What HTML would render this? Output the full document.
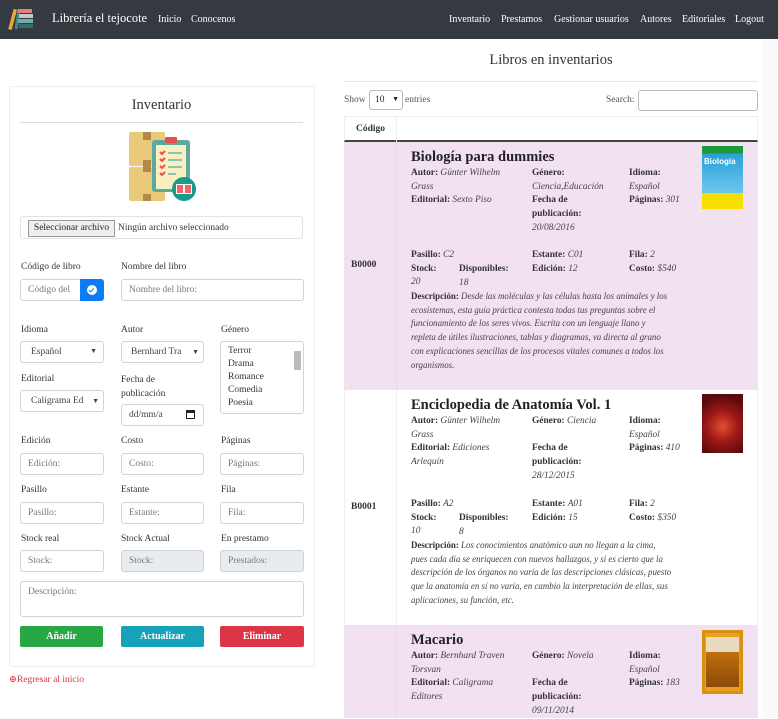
<!DOCTYPE html>
<html><head><meta charset="utf-8">
<style>
*{box-sizing:border-box;margin:0;padding:0}
body{width:778px;height:718px;overflow:hidden;background:#fff;font-family:"Liberation Serif","DejaVu Serif",serif;color:#212529;position:relative}
.a{position:absolute;white-space:nowrap}
.nav{position:absolute;left:0;top:0;width:778px;height:39px;background:#343a40}
.nl{color:#fff;font-size:10px;top:14px}
.lbl{font-size:9.5px;color:#333}
.inp{position:absolute;height:22px;border:1px solid #ced4da;border-radius:3px;background:#fff;font-size:9.5px;color:#777;padding:5px 7px;white-space:nowrap;overflow:hidden}
.dis{background:#e9ecef}
.btn{position:absolute;height:21px;border-radius:2px;color:#fff;font-size:10px;font-weight:bold;text-align:center;line-height:21px;top:626px;width:83px}
.row{position:absolute;left:344px;width:414px}
.cell{position:absolute;font-size:9.4px;line-height:13.7px;white-space:nowrap;color:#333}
.cell b{font-weight:bold}
.cell i{font-style:italic;color:#444}
.t{position:absolute;left:67px;font-size:14.5px;font-weight:bold;color:#222;white-space:nowrap}
.code{position:absolute;left:7px;font-size:9.5px;font-weight:bold;color:#333}
.desc{font-size:8.9px!important}
</style></head><body>
<div class="nav"></div>
<svg class="a" style="left:8px;top:5px" width="26" height="27" viewBox="0 0 26 27">
<rect x="3" y="4" width="3.5" height="21" fill="#e8a93a" transform="rotate(15 5 14)"/>
<rect x="8" y="4" width="3" height="20" fill="#3a8a8f" transform="rotate(8 9 14)"/>
<rect x="10" y="4" width="14" height="4" fill="#e08080"/>
<rect x="11" y="9" width="14" height="4" fill="#c0c8c8"/>
<rect x="10" y="14" width="15" height="4" fill="#7aa"/>
<rect x="11" y="19" width="14" height="4" fill="#2f6f6f"/>
</svg>
<div class="a" style="left:52px;top:11px;color:#fff;font-size:12.5px">Librería el tejocote</div>
<div class="a nl" style="left:158px">Inicio</div>
<div class="a nl" style="left:191px">Conocenos</div>
<div class="a nl" style="left:449px">Inventario</div>
<div class="a nl" style="left:501px">Prestamos</div>
<div class="a nl" style="left:554px">Gestionar usuarios</div>
<div class="a nl" style="left:640px">Autores</div>
<div class="a nl" style="left:682px">Editoriales</div>
<div class="a nl" style="left:735px">Logout</div>

<div class="a" style="left:9px;top:86px;width:306px;height:581px;border:1px solid #eee;border-radius:3px"></div>
<div class="a" style="left:20px;top:97px;width:283px;text-align:center;font-size:14.5px;color:#333">Inventario</div>
<div class="a" style="left:20px;top:122px;width:283px;border-top:1px solid #ddd"></div>
<svg class="a" style="left:128px;top:130px" width="70" height="74" viewBox="0 0 70 74">
<rect x="1" y="2" width="36" height="34" rx="2" fill="#e9c97a"/>
<rect x="1" y="37" width="36" height="34" rx="2" fill="#e9c97a"/>
<rect x="15" y="2" width="8" height="8" fill="#b3884a"/>
<rect x="15" y="30" width="8" height="12" fill="#b3884a"/>
<rect x="15" y="64" width="8" height="7" fill="#b3884a"/>
<rect x="24" y="10" width="38" height="52" rx="3" fill="#5fa8a0"/>
<rect x="28" y="15" width="30" height="44" fill="#faefc0"/>
<rect x="37" y="7" width="12" height="6" rx="1" fill="#e65050"/>
<g stroke="#e65050" stroke-width="2" fill="none"><path d="M32 22l2 2 3-3M32 29l2 2 3-3M32 36l2 2 3-3M32 43l2 2 3-3"/></g>
<g stroke="#5fb8b0" stroke-width="1.5"><path d="M40 23h14M40 30h14M40 37h14M40 44h8"/></g>
<circle cx="56" cy="59" r="12" fill="#1a9a8a"/>
<rect x="48" y="54" width="16" height="10" fill="#fff"/>
<rect x="49" y="55" width="6" height="8" fill="#e66"/><rect x="57" y="55" width="6" height="8" fill="#e66"/>
</svg>
<div class="a" style="left:20px;top:216px;width:283px;height:23px;border:1px solid #e3e3e3;border-radius:3px"></div>
<div class="a" style="left:28px;top:220px;width:87px;height:17px;border:1px solid #999;background:#efefef;font-size:9.5px;line-height:15px;text-align:center;color:#222">Seleccionar archivo</div>
<div class="a" style="left:118px;top:223px;font-size:9.5px;color:#333">Ningún archivo seleccionado</div>

<div class="a lbl" style="left:21px;top:262px">Código de libro</div>
<div class="a lbl" style="left:121px;top:262px">Nombre del libro</div>
<div class="inp" style="left:20px;top:279px;width:62px;border-radius:3px 0 0 3px">Código del</div>
<div class="a" style="left:80px;top:279px;width:24px;height:22px;background:#0d7bf2;border-radius:0 3px 3px 0"></div>
<div class="a" style="left:87px;top:285px;width:10px;height:10px;border-radius:50%;background:#fff"></div>
<div class="a" style="left:90px;top:287px;width:3px;height:5px;border:solid #0d7bf2;border-width:0 1.5px 1.5px 0;transform:rotate(45deg)"></div>
<div class="inp" style="left:121px;top:279px;width:183px">Nombre del libro:</div>

<div class="a lbl" style="left:21px;top:325px">Idioma</div>
<div class="a lbl" style="left:121px;top:325px">Autor</div>
<div class="a lbl" style="left:221px;top:325px">Género</div>
<div class="inp" style="left:20px;top:341px;width:84px;color:#444;padding-left:10px">Español<span style="position:absolute;right:6px;font-size:7px">&#9660;</span></div>
<div class="inp" style="left:121px;top:341px;width:83px;color:#444;padding-left:9px">Bernhard Tra<span style="position:absolute;right:4px;top:6px;font-size:7px;background:#fff">&#9660;</span></div>
<div class="inp" style="left:220px;top:341px;width:84px;height:73px;color:#333;line-height:13px;padding:3px 7px;white-space:normal">Terror<br>Drama<br>Romance<br>Comedia<br>Poesia</div>
<div class="a" style="left:294px;top:351px;width:7px;height:19px;background:#bbb"></div>
<div class="a lbl" style="left:21px;top:374px">Editorial</div>
<div class="a lbl" style="left:121px;top:374px;line-height:13.5px">Fecha de<br>publicación</div>
<div class="inp" style="left:20px;top:390px;width:84px;color:#444;padding-left:10px">Caligrama Ed<span style="position:absolute;right:4px;top:6px;font-size:7px;background:#fff">&#9660;</span></div>
<div class="inp" style="left:121px;top:404px;width:83px;color:#444">dd/mm/a<span style="position:absolute;right:8px;top:5px;width:9px;height:9px;border:1.5px solid #222;border-top-width:3px"></span></div>

<div class="a lbl" style="left:21px;top:436px">Edición</div>
<div class="a lbl" style="left:121px;top:436px">Costo</div>
<div class="a lbl" style="left:221px;top:436px">Páginas</div>
<div class="inp" style="left:20px;top:453px;width:84px">Edición:</div>
<div class="inp" style="left:121px;top:453px;width:83px">Costo:</div>
<div class="inp" style="left:220px;top:453px;width:84px">Páginas:</div>
<div class="a lbl" style="left:21px;top:485px">Pasillo</div>
<div class="a lbl" style="left:121px;top:485px">Estante</div>
<div class="a lbl" style="left:221px;top:485px">Fila</div>
<div class="inp" style="left:20px;top:502px;width:84px">Pasillo:</div>
<div class="inp" style="left:121px;top:502px;width:83px">Estante:</div>
<div class="inp" style="left:220px;top:502px;width:84px">Fila:</div>
<div class="a lbl" style="left:21px;top:534px">Stock real</div>
<div class="a lbl" style="left:121px;top:534px">Stock Actual</div>
<div class="a lbl" style="left:221px;top:534px">En prestamo</div>
<div class="inp" style="left:20px;top:550px;width:84px">Stock:</div>
<div class="inp dis" style="left:121px;top:550px;width:83px">Stock:</div>
<div class="inp dis" style="left:220px;top:550px;width:84px">Prestados:</div>
<div class="inp" style="left:20px;top:581px;width:284px;height:36px">Descripción:</div>
<div class="btn" style="left:20px;background:#28a745">Añadir</div>
<div class="btn" style="left:121px;background:#17a2b8">Actualizar</div>
<div class="btn" style="left:220px;width:84px;background:#dc3545">Eliminar</div>
<div class="a" style="left:9px;top:674px;font-size:9.5px;color:#dc3545">&#8853;Regresar al inicio</div>

<div class="a" style="left:344px;top:52px;width:414px;text-align:center;font-size:14.5px;color:#333">Libros en inventarios</div>
<div class="a" style="left:344px;top:81px;width:414px;border-top:1px solid #e5e5e5"></div>
<div class="a" style="left:344px;top:95px;font-size:9.5px;color:#555">Show</div>
<div class="a" style="left:369px;top:90px;width:34px;height:20px;border:1px solid #bbb;border-radius:3px;font-size:9.5px;padding:4px 5px">10<span style="position:absolute;right:3px;font-size:7px">&#9660;</span></div>
<div class="a" style="left:405px;top:95px;font-size:9.5px;color:#555">entries</div>
<div class="a" style="left:606px;top:95px;font-size:9.5px;color:#555">Search:</div>
<div class="a" style="left:638px;top:90px;width:120px;height:21px;border:1px solid #bbb;border-radius:3px"></div>
<div class="a" style="left:344px;top:116px;width:414px;height:26px;border:1px solid #eee;border-bottom:2px solid #444"></div>
<div class="a" style="left:396px;top:116px;height:26px;border-left:1px solid #eee"></div>
<div class="a" style="left:356px;top:124px;font-size:9.5px;font-weight:bold;color:#333">Código</div>

<div class="row" style="top:142px;height:248px;background:#f2e1f1">
<div class="a" style="left:52px;top:0;height:248px;border-left:1px solid #e8d8e8"></div>
<div class="t" style="top:7px">Biología para dummies</div>
<div class="cell" style="left:67px;top:25px"><b>Autor:</b> <i>Günter Wilhelm</i><br><i>Grass</i><br><b>Editorial:</b> <i>Sexto Piso</i></div>
<div class="cell" style="left:188px;top:25px"><b>Género:</b><br><i>Ciencia,Educación</i><br><b>Fecha de</b><br><b>publicación:</b><br><i>20/08/2016</i></div>
<div class="cell" style="left:285px;top:25px"><b>Idioma:</b><br><i>Español</i><br><b>Páginas:</b> <i>301</i></div>
<div class="a" style="left:358px;top:4px;width:41px;height:63px;background:linear-gradient(#1a9a3a 0,#1a9a3a 12%,#2aa0d8 12%,#6cc6ee 75%,#f5e000 75%)"></div>
<div class="a" style="left:360px;top:15px;font-family:'Liberation Sans',sans-serif;font-weight:bold;color:#fff;font-size:8px">Biología</div>
<div class="code" style="top:118px">B0000</div>
<div class="cell" style="left:67px;top:107px"><b>Pasillo:</b> <i>C2</i><br><b>Stock:</b><br><i>20</i></div>
<div class="cell" style="left:115px;top:121px"><b>Disponibles:</b><br><i>18</i></div>
<div class="cell" style="left:188px;top:107px"><b>Estante:</b> <i>C01</i><br><b>Edición:</b> <i>12</i></div>
<div class="cell" style="left:285px;top:107px"><b>Fila:</b> <i>2</i><br><b>Costo:</b> <i>$540</i></div>
<div class="cell desc" style="left:67px;top:148px"><b>Descripción:</b> <i>Desde las moléculas y las células hasta los animales y los<br>ecosistemas, esta guía práctica contesta todas tus preguntas sobre el<br>funcionamiento de los seres vivos. Escrita con un lenguaje llano y<br>repleta de útiles ilustraciones, tablas y diagramas, va directa al grano<br>con explicaciones sencillas de los procesos vitales comunes a todos los<br>organismos.</i></div>
</div>

<div class="row" style="top:390px;height:235px;background:#fff;box-shadow:inset 1px 0 #eee,inset -1px 0 #eee">
<div class="a" style="left:52px;top:0;height:235px;border-left:1px solid #eee"></div>
<div class="t" style="top:7px">Enciclopedia de Anatomía Vol. 1</div>
<div class="cell" style="left:67px;top:25px"><b>Autor:</b> <i>Günter Wilhelm</i><br><i>Grass</i><br><b>Editorial:</b> <i>Ediciones</i><br><i>Arlequín</i></div>
<div class="cell" style="left:188px;top:25px"><b>Género:</b> <i>Ciencia</i><br><br><b>Fecha de</b><br><b>publicación:</b><br><i>28/12/2015</i></div>
<div class="cell" style="left:285px;top:25px"><b>Idioma:</b><br><i>Español</i><br><b>Páginas:</b> <i>410</i></div>
<div class="a" style="left:358px;top:4px;width:41px;height:59px;background:radial-gradient(circle at 50% 55%,#e05030 0,#a01818 40%,#5a0a0a 80%)"></div>
<div class="code" style="top:112px">B0001</div>
<div class="cell" style="left:67px;top:108px"><b>Pasillo:</b> <i>A2</i><br><b>Stock:</b><br><i>10</i></div>
<div class="cell" style="left:115px;top:122px"><b>Disponibles:</b><br><i>8</i></div>
<div class="cell" style="left:188px;top:108px"><b>Estante:</b> <i>A01</i><br><b>Edición:</b> <i>15</i></div>
<div class="cell" style="left:285px;top:108px"><b>Fila:</b> <i>2</i><br><b>Costo:</b> <i>$350</i></div>
<div class="cell desc" style="left:67px;top:149px"><b>Descripción:</b> <i>Los conocimientos anatómico aun no llegan a la cima,<br>pues cada día se enriquecen con nuevos hallazgos, y si es cierto que la<br>descripción de los órganos no varía de las descripciones clásicas, puesto<br>que la anatomía en sí no varía, en cambio la interpretación de ellas, sus<br>aplicaciones, su función, etc.</i></div>
</div>

<div class="row" style="top:625px;height:93px;background:#f2e1f1">
<div class="a" style="left:52px;top:0;height:93px;border-left:1px solid #e8d8e8"></div>
<div class="t" style="top:7px">Macario</div>
<div class="cell" style="left:67px;top:25px"><b>Autor:</b> <i>Bernhard Traven</i><br><i>Torsvan</i><br><b>Editorial:</b> <i>Caligrama</i><br><i>Editores</i></div>
<div class="cell" style="left:188px;top:25px"><b>Género:</b> <i>Novela</i><br><br><b>Fecha de</b><br><b>publicación:</b><br><i>09/11/2014</i></div>
<div class="cell" style="left:285px;top:25px"><b>Idioma:</b><br><i>Español</i><br><b>Páginas:</b> <i>183</i></div>
<div class="a" style="left:358px;top:5px;width:41px;height:64px;background:#e8a020;border:3px solid #d89010"></div>
<div class="a" style="left:362px;top:12px;width:33px;height:50px;background:linear-gradient(#e8dcc0 0,#e8dcc0 30%,#c07010 30%,#8a4a08 100%)"></div>
</div>
<div class="a" style="left:763px;top:39px;width:15px;height:679px;background:#fafafa"></div>
</body></html>
